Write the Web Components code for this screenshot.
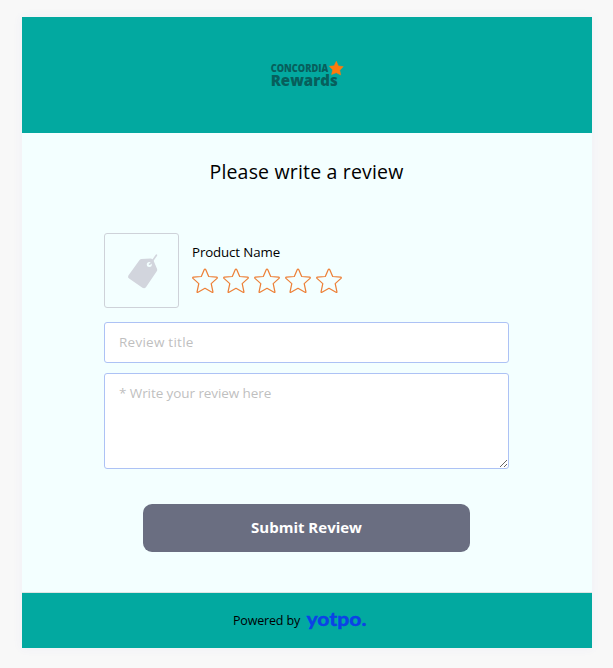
<!DOCTYPE html>
<html lang="en">
<head>
<meta charset="utf-8">
<title>Please write a review</title>
<style>
html,body{margin:0;background:#f8f8f8}
body{min-height:668px;font-family:"Open Sans","Noto Sans",sans-serif;color:#000}
</style>
</head>
<body>
<review-card>
  <rewards-logo slot="header"></rewards-logo>
  <span slot="title">Please write a review</span>
  <product-summary><span>Product Name</span></product-summary>
  <review-fields></review-fields>
  <submit-button>Submit Review</submit-button>
  <powered-by slot="footer">Powered by</powered-by>
</review-card>
<script>
const define = (name, html) => customElements.define(name, class extends HTMLElement {
  constructor() {
    super();
    this.attachShadow({mode: 'open'}).innerHTML = html;
  }
});

define('review-card', `
<style>
:host{display:flex;flex-direction:column;width:570px;height:631px;margin:17px 0 0 22px;background:#f3ffff;box-shadow:0 0 10px rgba(80,90,200,.06)}
header{height:116px;flex:none;background:#02a9a0;display:flex;justify-content:center}
main{flex:1;display:flex;flex-direction:column;border-bottom:1px solid #dde5e3;box-sizing:border-box;padding:0 83px 0 82px}
h1{margin:24px 0 47px;font-weight:400;font-size:19.5px;line-height:29px;text-align:center;letter-spacing:.18px}
footer{height:55px;flex:none;background:#02a9a0;display:flex}
</style>
<header><slot name="header"></slot></header>
<main><h1><slot name="title"></slot></h1><slot></slot></main>
<footer><slot name="footer"></slot></footer>`);

define('rewards-logo', `
<style>
:host{display:block;padding-top:43px}
svg{display:block}
text{font-family:"Open Sans",sans-serif;fill:#075f5c}
</style>
<svg width="74" height="30" viewBox="0 0 74 30">
  <text x="0.7" y="12.1" font-size="9.8" font-weight="800" textLength="57.5" lengthAdjust="spacingAndGlyphs">CONCORDIA</text>
  <text x="0.7" y="26" font-size="15.5" font-weight="800" textLength="67" lengthAdjust="spacingAndGlyphs">Rewards</text>
  <path d="M66.3 1.3 68.4 5.9 73.3 6.6 69.8 10.3 70.7 15 66.3 12.7 61.6 14.6 62.6 9.8 59.3 6.2 64.1 5.8Z" fill="#ff7a0c" stroke="#ff7a0c" stroke-width=".5"/>
</svg>`);

define('star-rating', `
<style>
:host{display:flex;gap:3px}
svg{display:block;width:28px;height:28px}
path{fill:none;stroke:#ed8038;stroke-width:1.25;stroke-linejoin:round}
</style>` + `<svg viewBox="0 0 28 28"><path d="M14 2.1Q14.5 2.1 14.8 2.8L17.7 9.5 25.6 10.2Q26.8 10.4 26 11.4L20.2 16.6 21.9 24.6Q22.1 25.9 21 25.3L14 21.3 7 25.3Q5.9 25.9 6.1 24.6L7.8 16.6 2 11.4Q1.2 10.4 2.4 10.2L10.3 9.5 13.2 2.8Q13.5 2.1 14 2.1Z"/></svg>`.repeat(5));

define('product-summary', `
<style>
:host{display:flex;gap:12px;height:75px}
.thumb{width:75px;height:75px;box-sizing:border-box;border:1px solid #ced2d9;border-radius:3px;flex:none;display:grid;place-items:center}
.info{display:flex;flex-direction:column;padding-top:9px}
.name{font-size:13.3px;line-height:20px;padding-left:1px;letter-spacing:-.12px}
star-rating{margin-top:5px}
</style>
<div class="thumb"><svg width="38" height="42" viewBox="-.6 -.6 38 42">
  <path d="M17.5 8.5 27 8Q29 8 29.8 9.7L33.5 18.3Q34 19.6 33 21L22.5 36.3Q21 38.4 18.8 37.1L5.5 28Q3.6 26.7 4.8 24.8L15.6 9.8Q16.3 8.7 17.5 8.5Z" fill="#d2d5dd"/>
  <circle cx="25.7" cy="14" r="2.5" fill="#f3ffff"/>
  <path d="M26 13.6Q27.6 13.2 28.2 11.2L32.8 4.6" fill="none" stroke="#d2d5dd" stroke-width="1.7" stroke-linecap="round"/>
</svg></div>
<div class="info"><div class="name"><slot></slot></div><star-rating></star-rating></div>`);

define('review-fields', `
<style>
:host{display:flex;flex-direction:column;gap:10px;margin-top:14px}
input,textarea{display:block;width:405px;margin:0;box-sizing:border-box;border:1px solid #adc2f5;border-radius:3px;background:#fff;outline:0;padding:0 14px;font:500 13.5px "Open Sans","Noto Sans",sans-serif;color:#333}
input{height:41px;padding-bottom:2px;letter-spacing:.25px}
textarea{height:96px;padding:10px 14px;line-height:19px;overflow:hidden;resize:both;letter-spacing:-.08px}
::placeholder{color:#bfbfbf;opacity:1}
</style>
<input type="text" placeholder="Review title" aria-label="Review title">
<textarea placeholder="* Write your review here" aria-label="Write your review here"></textarea>`);

define('submit-button', `
<style>
:host{display:flex;justify-content:center;margin-top:35px}
button{width:327px;height:48px;border:0;border-radius:9px;background:#6a6e81;color:#fff;padding:0 0 2px;font:700 15px "Open Sans","Noto Sans",sans-serif;cursor:pointer}
</style>
<button type="button"><slot></slot></button>`);

define('powered-by', `
<style>
:host{display:flex;width:100%;align-items:center;gap:6px;padding-left:211px;font-size:12.5px;letter-spacing:-.17px}
.label{white-space:nowrap;width:67px}
svg{display:block;overflow:visible}
text{font-family:Lato,sans-serif;font-weight:900;fill:#0c42e6;stroke:#0c42e6;stroke-width:.3;letter-spacing:0}
</style>
<span class="label"><slot></slot></span>
<svg width="64" height="26" viewBox="0 0 64 26" role="img" aria-label="yotpo.">
  <text x="0.5" y="18" font-size="19.5" textLength="60" lengthAdjust="spacingAndGlyphs">yotpo.</text>
</svg>`);
</script>
</body>
</html>
